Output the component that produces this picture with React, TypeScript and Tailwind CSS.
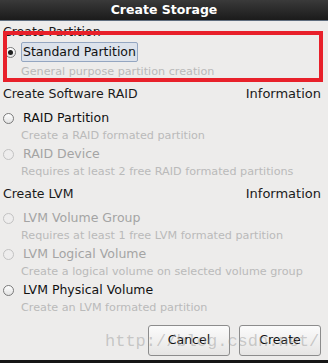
import clsx from "clsx";

interface Option {
  label: string;
  description: string;
  disabled?: boolean;
  checked?: boolean;
  focused?: boolean;
}

interface Group {
  title: string;
  info?: string;
  options: Option[];
}

const groups: Group[] = [
  {
    title: "Create Partition",
    options: [
      {
        label: "Standard Partition",
        description: "General purpose partition creation",
        checked: true,
        focused: true,
      },
    ],
  },
  {
    title: "Create Software RAID",
    info: "Information",
    options: [
      { label: "RAID Partition", description: "Create a RAID formated partition" },
      {
        label: "RAID Device",
        description: "Requires at least 2 free RAID formated partitions",
        disabled: true,
      },
    ],
  },
  {
    title: "Create LVM",
    info: "Information",
    options: [
      {
        label: "LVM Volume Group",
        description: "Requires at least 1 free LVM formated partition",
        disabled: true,
      },
      {
        label: "LVM Logical Volume",
        description: "Create a logical volume on selected volume group",
        disabled: true,
      },
      { label: "LVM Physical Volume", description: "Create an LVM formated partition" },
    ],
  },
];

const Radio = ({ checked, disabled }: { checked?: boolean; disabled?: boolean }) => (
  <span
    className={clsx(
      "flex h-[11px] w-[11px] items-center justify-center rounded-full border",
      disabled
        ? "border-[#c2c2c2] bg-[#eeeded]"
        : "border-[#7a7a7a] bg-linear-to-b from-white to-[#e2e2e2]"
    )}
  >
    {checked && <span className="h-[5px] w-[5px] rounded-full bg-[#1e1e1e]" />}
  </span>
);

const OptionRow = ({ option }: { option: Option }) => (
  <>
    <div className={clsx("flex items-center", option.focused ? "h-[21px]" : "h-[18px]")}>
      <div className={clsx("w-[18px] shrink-0", option.focused && "pl-[2px]")}>
        <Radio checked={option.checked} disabled={option.disabled} />
      </div>
      {option.focused ? (
        <span className="h-[20px] self-start rounded-[2px] border border-[#94a6c1] bg-[#dce2eb] px-[1px] text-[12.5px] leading-[18px] text-[#111]">
          {option.label}
        </span>
      ) : (
        <span
          className={clsx(
            "pl-[2px] text-[12.5px] leading-[18px]",
            option.disabled ? "text-[#a4a4a4]" : "text-[#111]"
          )}
        >
          {option.label}
        </span>
      )}
    </div>
    <div className="h-[18px] pl-[18px] text-[11.2px] leading-[18px] text-[#bababa]">
      {option.description}
    </div>
  </>
);

export default function App() {
  return (
    <div className="relative flex h-[363px] w-[328px] flex-col overflow-hidden bg-[#edeceb] font-['DejaVu_Sans',sans-serif]">
      <div className="h-[21px] shrink-0 border-b border-[#5f6d7e] bg-linear-to-b from-[#3a3a3a] to-[#1b1b1b] text-center text-[12.5px] font-bold leading-[20px] text-white">
        Create Storage
      </div>

      <div className="flex flex-1 flex-col pl-[3px] pr-[7px]">
        {groups.map((group, i) => (
          <div key={group.title}>
            <div
              className={clsx(
                "flex justify-between text-[12.5px] text-[#1a1a1a]",
                i === 0 ? "h-[21px] leading-[21px]" : "h-[28px] leading-[26px]"
              )}
            >
              <span>{group.title}</span>
              {group.info && <span className="text-[13px]">{group.info}</span>}
            </div>
            {group.options.map((option) => (
              <OptionRow key={option.label} option={option} />
            ))}
          </div>
        ))}

        <div className="mt-[8px] flex justify-end gap-[9px]">
          {["Cancel", "Create"].map((label) => (
            <button
              key={label}
              className="h-[31px] w-[82px] rounded-[3px] border border-[#8c8c8c] bg-linear-to-b from-[#fbfbfb] to-[#e6e5e4] text-[12.5px] text-[#111]"
            >
              {label}
            </button>
          ))}
        </div>
      </div>

      <div className="h-[3px] shrink-0 bg-[#151515]" />

      {/* highlight annotation */}
      <div className="pointer-events-none absolute left-[3px] top-[31px] h-[51px] w-[320px] border-4 border-[#e8202a]" />

      {/* watermark */}
      <div className="pointer-events-none absolute left-[105px] top-[331px] font-['Liberation_Mono',monospace] text-[17px] leading-[22px] text-[rgba(150,150,150,0.45)]">
        http://blog.csdn.net/
      </div>
    </div>
  );
}
